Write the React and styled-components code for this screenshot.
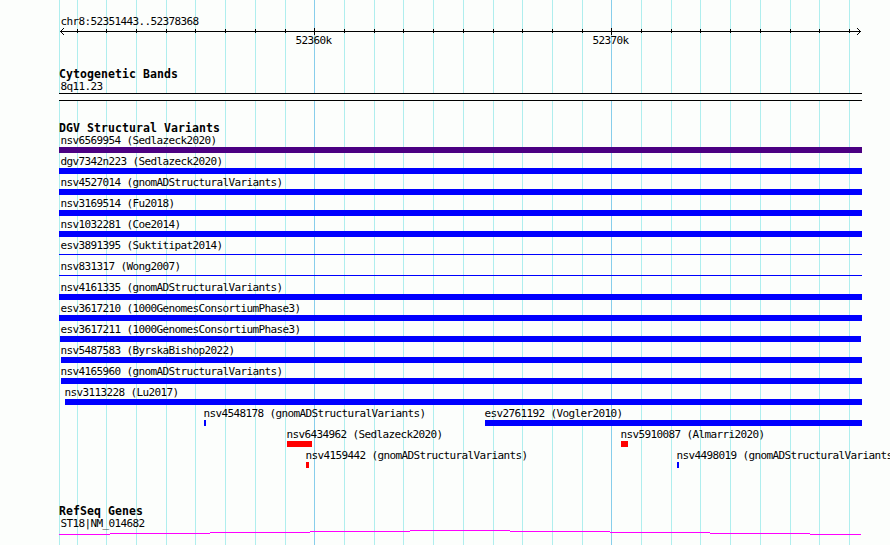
import React from "react";
import styled, { createGlobalStyle } from "styled-components";

const GlobalStyle = createGlobalStyle`
  html, body {
    margin: 0;
    padding: 0;
    overflow: hidden;
    background: #fcfefc;
  }
`;

const LEFT = 59;

const Browser = styled.div`
  position: relative;
  width: 890px;
  height: 545px;
  box-sizing: border-box;
  padding: 15px 0 0 ${LEFT}px;
  overflow: hidden;
  background: #fcfefc;
  color: #000;
  font-family: "DejaVu Sans Mono", monospace;
  font-size: 11px;
  line-height: 13px;
`;

const GridLine = styled.div`
  position: absolute;
  top: 0;
  bottom: 0;
  left: ${(props) => props.$x}px;
  width: 1px;
  background: ${(props) => (props.$major ? "#87ceeb" : "#afeeee")};
`;

const Content = styled.div`
  position: relative;
`;

const Label = styled.div`
  height: 13px;
  padding-left: 1.4px;
  letter-spacing: -0.622px;
  white-space: pre;
`;

const Ruler = styled.header`
  height: 53px;

  svg {
    display: block;
  }
`;

const TickLabels = styled.div`
  display: grid;
  margin-top: -1px;
`;

const TickLabel = styled(Label)`
  grid-area: 1 / 1;
  padding: 0 0 0 0.4px;
  margin-left: ${(props) => props.$x - LEFT}px;
`;

const Track = styled.section`
  margin-bottom: ${(props) => props.$gap || 0}px;

  svg {
    display: block;
  }
`;

const Title = styled.h2`
  height: 12px;
  margin: 0;
  font-size: 11.5px;
  font-weight: bold;
  line-height: 13px;
  letter-spacing: 0.077px;
  white-space: pre;
`;

const Band = styled.div`
  width: 803px;
  height: 8px;
  box-sizing: border-box;
  border: solid #000;
  border-width: 1px 0;
  background: #fcfefc;
`;

const Lane = styled.div`
  display: grid;
  height: 21px;
`;

const Feature = styled.div`
  grid-area: 1 / 1;
  margin-left: ${(props) => props.$start - LEFT}px;
`;

const FeatureLabel = styled(Label)`
  padding: 0 0 0 0.4px;
  margin-left: ${(props) => props.$shift}px;
`;

const Bar = styled.div`
  width: ${(props) => props.$width}px;
  height: ${(props) => (props.$thin ? 1 : 6)}px;
  margin-top: ${(props) => (props.$thin ? 2 : 0)}px;
  background: ${(props) => props.$color || "#0000ff"};
`;

const minor = [
  77, 106, 136, 166, 195, 225, 255, 285, 344, 374, 403, 433, 463, 493, 522,
  552, 582, 641, 671, 700, 730, 760, 790, 819, 849,
];
const major = [314, 611];

const lanes = [
  [{ name: "nsv6569954 (Sedlazeck2020)", start: 59, end: 862, color: "#4b0082" }],
  [{ name: "dgv7342n223 (Sedlazeck2020)", start: 59, end: 862 }],
  [{ name: "nsv4527014 (gnomADStructuralVariants)", start: 59, end: 862 }],
  [{ name: "nsv3169514 (Fu2018)", start: 59, end: 862 }],
  [{ name: "nsv1032281 (Coe2014)", start: 59, end: 862 }],
  [{ name: "esv3891395 (Suktitipat2014)", start: 59, end: 862, thin: true }],
  [{ name: "nsv831317 (Wong2007)", start: 59, end: 862, thin: true }],
  [{ name: "nsv4161335 (gnomADStructuralVariants)", start: 59, end: 862 }],
  [{ name: "esv3617210 (1000GenomesConsortiumPhase3)", start: 59, end: 862 }],
  [{ name: "esv3617211 (1000GenomesConsortiumPhase3)", start: 60, end: 861 }],
  [{ name: "nsv5487583 (ByrskaBishop2022)", start: 61, end: 862 }],
  [{ name: "nsv4165960 (gnomADStructuralVariants)", start: 61, end: 862 }],
  [{ name: "nsv3113228 (Lu2017)", start: 65, end: 862 }],
  [
    { name: "nsv4548178 (gnomADStructuralVariants)", start: 204, end: 206 },
    { name: "esv2761192 (Vogler2010)", start: 485, end: 862 },
  ],
  [
    { name: "nsv6434962 (Sedlazeck2020)", start: 287, end: 312, color: "#ff0000" },
    { name: "nsv5910087 (Almarri2020)", start: 621, end: 628, color: "#ff0000" },
  ],
  [
    { name: "nsv4159442 (gnomADStructuralVariants)", start: 306, end: 309, color: "#ff0000" },
    { name: "nsv4498019 (gnomADStructuralVariants)", start: 677, end: 679 },
  ],
];

const Axis = () => (
  <svg width="803" height="7" viewBox="59 0 803 7" shapeRendering="crispEdges">
    <path d="M60 3h801v1H60z" />
    {minor.map((x) => (
      <path key={x} d={`M${x} 1h1v4h-1z`} />
    ))}
    {major.map((x) => (
      <path key={x} d={`M${x} 0h1v7h-1z`} />
    ))}
    {/* arrow heads */}
    <path d="M61 2h1v1h-1zM62 1h1v1h-1zM63 0h1v1h-1zM61 4h1v1h-1zM62 5h1v1h-1zM63 6h1v1h-1z" />
    <path d="M859 2h1v1h-1zM858 1h1v1h-1zM857 0h1v1h-1zM859 4h1v1h-1zM858 5h1v1h-1zM857 6h1v1h-1z" />
  </svg>
);

const Gene = () => (
  <svg width="803" height="15" viewBox="59 530 803 15" shapeRendering="crispEdges">
    <path
      fill="#ff00ff"
      d="M59 534h51v1H59zM110 533h100v1H110zM210 532h100v1H210zM310 531h100v1H310zM410 530h100v1H410zM510 531h100v1H510zM610 532h100v1H610zM710 533h100v1H710zM810 534h51v1H810z"
    />
  </svg>
);

const App = () => {
  return (
    <>
      <GlobalStyle />
      <Browser>
        <GridLine $x={59} />
        {minor.map((x) => (
          <GridLine key={x} $x={x} />
        ))}
        {major.map((x) => (
          <GridLine key={x} $x={x} $major />
        ))}
        <Content>
          <Ruler>
            <Label>chr8:52351443..52378368</Label>
            <Axis />
            <TickLabels>
              <TickLabel $x={295}>52360k</TickLabel>
              <TickLabel $x={592}>52370k</TickLabel>
            </TickLabels>
          </Ruler>
          <Track $gap={21}>
            <Title>Cytogenetic Bands</Title>
            <Label>8q11.23</Label>
            <Band />
          </Track>
          <Track $gap={35}>
            <Title>DGV Structural Variants</Title>
            {lanes.map((lane, i) => (
              <Lane key={i}>
                {lane.map((f) => (
                  <Feature key={f.name} $start={f.start}>
                    <FeatureLabel $shift={f.start < 62 ? 60 - f.start : -1}>
                      {f.name}
                    </FeatureLabel>
                    <Bar $width={f.end - f.start} $thin={f.thin} $color={f.color} />
                  </Feature>
                ))}
              </Lane>
            ))}
          </Track>
          <Track>
            <Title>RefSeq Genes</Title>
            <Label>ST18|NM_014682</Label>
            <Gene />
          </Track>
        </Content>
      </Browser>
    </>
  );
};

export default App;
